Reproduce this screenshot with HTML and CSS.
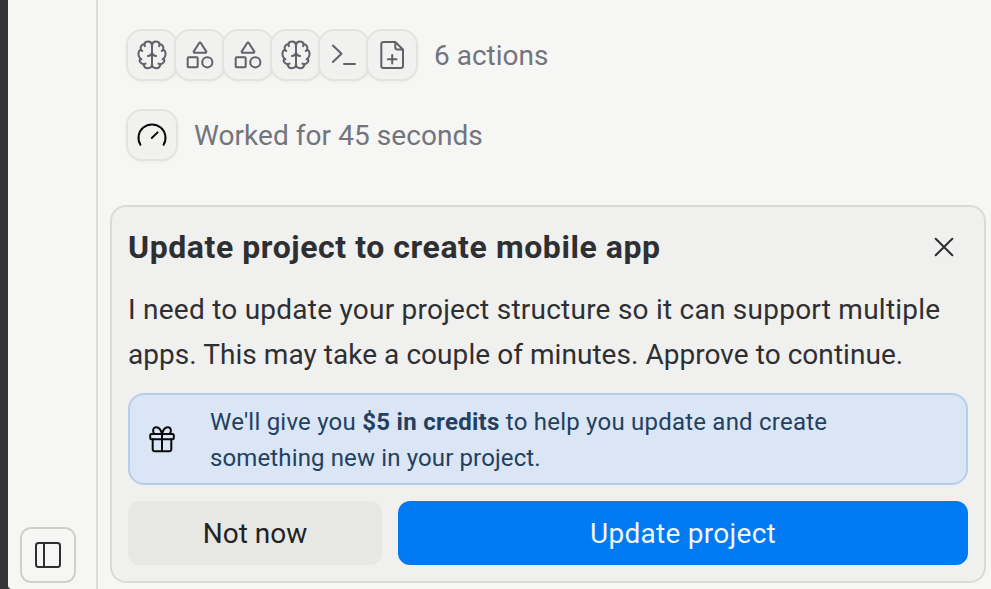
FILE: index.html
```
<!doctype html>
<html lang="en">
<head>
<meta charset="utf-8" />
<meta name="viewport" content="width=device-width" />

<title>Update project</title>

<link rel="stylesheet" href="styles.css">

</head>
<body>

<svg class="symbols">
  <symbol id="brain" viewBox="0 0 32 32">
    <path d="M16 5.8C15.6 3.4 14 2.4 12.2 2.4C9.8 2.4 8.5 3.8 8.4 5.2C5.6 5.4 4 7.6 4.8 10.4C2 12.6 1.5 16.6 4 19.2C3 22.4 4.6 24.8 7.3 25C8 28 9.6 29.3 11.8 29.2C14.2 29.2 15.8 27.6 16 25.5V5.8C16.4 3.4 18 2.4 19.8 2.4C22.2 2.4 23.5 3.8 23.6 5.2C26.4 5.4 28 7.6 27.2 10.4C30 12.6 30.5 16.6 28 19.2C29 22.4 27.4 24.8 24.7 25C24 28 22.4 29.3 20.2 29.2C17.8 29.2 16.2 27.6 16 25.5" />
    <path d="M11.9 17Q15 16.8 16 14.2Q17 16.8 20.1 17M4.8 10.4Q5.2 11.3 6.2 11.9M27.2 10.4Q26.8 11.3 25.8 11.9M8.4 5.2Q8.3 6.3 8.9 7.1M23.6 5.2Q23.7 6.3 23.1 7.1M7.3 25Q8.5 25.1 9.5 24.6M24.7 25Q23.5 25.1 22.5 24.6M4 19.2Q4.6 19.9 5.4 20.3M28 19.2Q27.4 19.9 26.6 20.3" />
  </symbol>
  <symbol id="shapes" viewBox="0 0 32 32">
    <path d="M15.2 4Q16 2.8 16.8 4L22.2 12.4Q22.8 13.7 21.5 13.7H10.5Q9.2 13.7 9.8 12.4Z" />
    <rect x="3.7" y="18.3" width="10" height="10" rx="1" />
    <circle cx="23.3" cy="23.3" r="5.1" />
  </symbol>
</svg>

<div class="app">
  <div class="edge"></div>

  <div class="sidebar">
    <button class="sidebar-button" aria-label="Toggle sidebar">
      <svg class="icon icon--panel" viewBox="0 0 32 32"><rect x="4" y="4" width="24" height="24" rx="2.5" /><path d="M12 4V28" /></svg>
    </button>
  </div>

  <div class="main">
    <div class="row">
      <div class="badges">
        <span class="badge"><svg class="icon"><use href="#brain" /></svg></span>
        <span class="badge"><svg class="icon"><use href="#shapes" /></svg></span>
        <span class="badge"><svg class="icon"><use href="#shapes" /></svg></span>
        <span class="badge"><svg class="icon"><use href="#brain" /></svg></span>
        <span class="badge"><svg class="icon" viewBox="0 0 32 32"><path d="M4.9 6.5L13.5 14.7L4.9 23M16 25H27" /></svg></span>
        <span class="badge"><svg class="icon" viewBox="0 0 32 32"><path d="M19.3 3H7.5Q5.3 3 5.3 5.2V26.8Q5.3 29 7.5 29H24.8Q27 29 27 26.8V10.5L19.3 3V8.5Q19.3 10.5 21.3 10.5H27M16.2 16V24.6M11.9 20.3H20.5" /></svg></span>
      </div>
      <span class="row-text row-text--actions">6 actions</span>
    </div>

    <div class="row">
      <span class="badge badge--dark"><svg class="icon" viewBox="0 0 32 32"><path d="M4.4 25.8A13.5 13.5 0 1 1 27.6 25.8M15.8 19L21.6 13.4" /></svg></span>
      <span class="row-text row-text--worked">Worked for 45 seconds</span>
    </div>

    <div class="card">
      <div class="card-header">
        <h2 class="card-title">Update project to create mobile app</h2>
        <button class="close-button" aria-label="Close">
          <svg class="icon" viewBox="0 0 32 32"><path d="M7.7 7.7L24.3 24.3M24.3 7.7L7.7 24.3" /></svg>
        </button>
      </div>

      <p class="card-text"><span class="card-line--1">I need to update your project structure so it can support multiple</span><br>
      <span class="card-line--2">apps. This may take a couple of minutes. Approve to continue.</span></p>

      <div class="notice">
        <svg class="icon icon--gift" viewBox="0 0 32 32"><rect x="4.2" y="11" width="23.6" height="5.2" rx="1.3" /><path d="M6.7 16.2V26Q6.7 28.2 8.9 28.2H23.1Q25.3 28.2 25.3 26V16.2M16 11V28.2M16 11C14.8 6 12.5 3.8 9.7 4.2C6.7 4.7 6.4 8 8.2 11M16 11C17.2 6 19.5 3.8 22.3 4.2C25.3 4.7 25.6 8 23.8 11" /></svg>
        <p class="notice-text"><span class="notice-line--1">We'll give you <b>$5 in credits</b> to help you update and create</span><br>
        <span class="notice-line--2">something new in your project.</span></p>
      </div>

      <div class="buttons">
        <button class="button button--secondary">Not now</button>
        <button class="button button--primary">Update project</button>
      </div>
    </div>
  </div>
</div>

</body>
</html>
```
FILE: styles.css
```
* { box-sizing: border-box; }

body {
  margin: 0;
  overflow: hidden;
  background: #F6F6F4;
  color: #2E2F33;
  font-family: Roboto, "Liberation Sans", sans-serif;
}

h2, p { margin: 0; }

button {
  border: 0;
  padding: 0;
  background: none;
  color: inherit;
  font-family: inherit;
}

.symbols {
  display: none;
}

.app {
  display: flex;
  height: 589px;
  background: #353538;
}

.edge {
  width: 8px;
  background: #353538;
}

/* sidebar */

.sidebar {
  display: flex;
  flex-direction: column;
  justify-content: flex-end;
  width: 90px;
  padding: 0 12px 6px;
  border-right: 2px solid #DCDDD7;
  border-bottom-left-radius: 4px;
  background: #F6F6F4;
}

.sidebar-button {
  display: flex;
  align-items: center;
  justify-content: center;
  width: 56px;
  height: 56px;
  border: 2px solid #D0D1C9;
  border-radius: 11px;
}

.icon {
  flex: none;
  width: 32px;
  height: 32px;
  fill: none;
  stroke: currentColor;
  stroke-width: 2;
  stroke-linecap: round;
  stroke-linejoin: round;
}

/* main */

.main {
  flex: 1;
  padding: 29px 5px 0 12px;
  background: #F6F6F4;
}

.row {
  display: flex;
  align-items: center;
  gap: 16px;
  height: 52px;
  margin: 0 0 28px 16px;
}

.badges {
  display: flex;
}

.badge {
  display: flex;
  align-items: center;
  justify-content: center;
  width: 52px;
  height: 52px;
  border: 2px solid #E2E3DF;
  border-radius: 16px;
  background: #F1F1EF;
  box-shadow: 0 2px 3px rgba(0, 0, 0, 0.03);
  color: #606169;
}

.badge + .badge { margin-left: -4px; }

.badge--dark { color: #090909; }

.row-text {
  padding-top: 2px;
  color: #73747C;
  font-size: 28px;
  line-height: 36px;
}

.row-text--worked { letter-spacing: 0.06px; }

/* card */

.card {
  width: 876px;
  height: 378px;
  margin-top: 44px;
  padding: 16px;
  border: 2px solid #DADBD5;
  border-radius: 16px;
  background: #F0F0EE;
}

.card-header {
  display: flex;
  align-items: center;
  justify-content: space-between;
  height: 48px;
  padding-right: 8px;
}

.card-title {
  font-size: 32px;
  font-weight: 700;
  letter-spacing: 0.57px;
  line-height: 48px;
  white-space: nowrap;
}

.close-button {
  display: flex;
}

.card-text {
  height: 90px;
  margin-top: 16px;
  font-size: 28px;
  line-height: 45px;
  white-space: nowrap;
}

.card-line--1 { letter-spacing: 0.24px; }
.card-line--2 { letter-spacing: 0.05px; }

.notice {
  display: flex;
  align-items: center;
  gap: 32px;
  height: 92px;
  margin-top: 16px;
  padding-left: 16px;
  border: 2px solid #B7CEEB;
  border-radius: 16px;
  background: #DAE5F5;
}

.icon--gift { color: #090909; }

.notice-text {
  padding-top: 2px;
  color: #23405F;
  font-size: 24px;
  line-height: 36px;
  white-space: nowrap;
}

.notice-line--1 { letter-spacing: 0.22px; }
.notice-line--2 { letter-spacing: 0.13px; }

.notice-line--1 b { letter-spacing: 0.3px; }

.buttons {
  display: flex;
  gap: 16px;
  margin-top: 16px;
}

.button {
  height: 64px;
  border-radius: 12px;
  font-size: 28px;
}

.button--secondary {
  width: 254px;
  background: #E7E7E3;
  color: #222326;
}

.button--primary {
  flex: 1;
  background: #007AF3;
  color: #F1F5FA;
  letter-spacing: 0.28px;
}
```
